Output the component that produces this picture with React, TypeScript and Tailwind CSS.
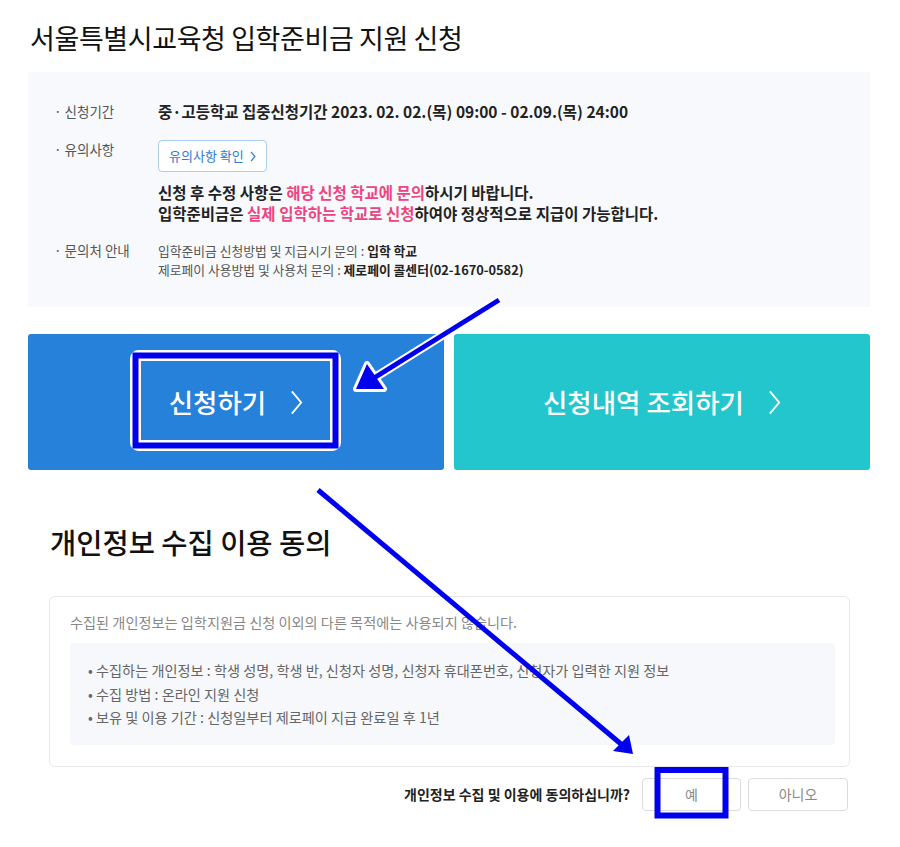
import React from 'react';

const FONT = '"Noto Sans CJK KR", "Noto Sans", sans-serif';

function Chevron({ className, width = 2 }: { className?: string; width?: number }) {
  return (
    <svg viewBox="0 0 14 28" className={className} fill="none" stroke="currentColor" strokeWidth={width}>
      <path d="M2 2 L12 14 L2 26" />
    </svg>
  );
}

function InfoRow({ label, children, labelClass }: { label: string; children: React.ReactNode; labelClass?: string }) {
  return (
    <div className="flex">
      <div className={`w-[130px] shrink-0 pl-[26px] text-[13.5px] text-[#555] ${labelClass ?? 'leading-[22px]'}`}>
        · {label}
      </div>
      <div className="flex-1">{children}</div>
    </div>
  );
}

function Annotations() {
  return (
    <svg className="pointer-events-none absolute left-0 top-0" width="900" height="847" viewBox="0 0 900 847">
      {/* box around 신청하기 */}
      <rect x="135.5" y="355.5" width="200" height="90" rx="3" fill="none" stroke="#fff" strokeWidth="11" />
      <rect x="135.5" y="355.5" width="200" height="90" fill="none" stroke="#0000ee" strokeWidth="6" />
      {/* arrow to 신청하기 */}
      <line x1="499" y1="300" x2="374" y2="378" stroke="#fff" strokeWidth="9" strokeLinecap="round" />
      <polygon points="356,389 367,364 384,389" fill="#fff" stroke="#fff" strokeWidth="6" strokeLinejoin="round" />
      <line x1="499" y1="300" x2="374" y2="378" stroke="#0000ee" strokeWidth="5" />
      <polygon points="356,389 367,364 384,389" fill="#0000ee" />
      {/* arrow to 예 */}
      <line x1="318" y1="490" x2="621" y2="744" stroke="#0000ee" strokeWidth="5" />
      <polygon points="633,754 613,751 629,735" fill="#0000ee" />
      {/* box around 예 */}
      <rect x="657.5" y="770" width="68" height="45.5" fill="none" stroke="#0000ee" strokeWidth="6" />
    </svg>
  );
}

export default function App() {
  return (
    <div className="relative h-[847px] w-[900px] overflow-hidden bg-white" style={{ fontFamily: FONT }}>
      <div className="pl-[28px] pr-[30px]">
        <h1 className="pt-[18px] pl-[2px] text-[27px] leading-[40px] font-normal tracking-[-0.4px] text-[#111]">
          서울특별시교육청 입학준비금 지원 신청
        </h1>

        {/* info box */}
        <div className="mt-[14px] h-[235px] bg-[#f7f9fc] pt-[28px]">
          <InfoRow label="신청기간">
            <p className="text-[15.5px] leading-[22px] font-bold text-[#222]">
              중·고등학교 집중신청기간 2023. 02. 02.(목) 09:00 - 02.09.(목) 24:00
            </p>
          </InfoRow>
          <div className="mt-[18px]">
            <InfoRow label="유의사항" labelClass="leading-[18px]">
              <button className="flex h-[32px] items-center gap-[6px] rounded-[4px] border border-[#a9cdee] bg-white px-[10px] text-[13px] text-[#2b7bd6]">
                유의사항 확인
                <Chevron className="h-[11px] w-[6px]" width={3} />
              </button>
              <div className="mt-[10px] text-[15.5px] leading-[21px] font-bold text-[#222]">
                <p>
                  신청 후 수정 사항은 <span className="text-[#ec4580]">해당 신청 학교에 문의</span>하시기 바랍니다.
                </p>
                <p>
                  입학준비금은 <span className="text-[#ec4580]">실제 입학하는 학교로 신청</span>하여야 정상적으로 지급이 가능합니다.
                </p>
              </div>
            </InfoRow>
          </div>
          <div className="mt-[17px]">
            <InfoRow label="문의처 안내" labelClass="leading-[19px]">
              <div className="text-[12.8px] leading-[19px] text-[#555]">
                <p>
                  입학준비금 신청방법 및 지급시기 문의 : <b className="text-[#222]">입학 학교</b>
                </p>
                <p>
                  제로페이 사용방법 및 사용처 문의 : <b className="text-[#222]">제로페이 콜센터(02-1670-0582)</b>
                </p>
              </div>
            </InfoRow>
          </div>
        </div>

        {/* action buttons */}
        <div className="mt-[27px] flex h-[136px] gap-[10px]">
          <button className="flex flex-1 items-center justify-center gap-[24px] rounded-[3px] bg-[#2581da] text-[26.5px] font-medium text-white">
            <span>신청하기</span>
            <Chevron className="h-[27px] w-[13px]" />
          </button>
          <button className="flex flex-1 items-center justify-center gap-[24px] rounded-[3px] bg-[#24c6cd] text-[26.5px] font-medium text-white">
            <span>신청내역 조회하기</span>
            <Chevron className="h-[27px] w-[13px]" />
          </button>
        </div>
      </div>

      {/* privacy consent */}
      <div className="pl-[49px] pr-[50px]">
        <h2 className="mt-[53px] pl-[1px] text-[28.5px] leading-[38px] font-medium text-[#111]">개인정보 수집 이용 동의</h2>
        <div className="mt-[35px] rounded-[6px] border border-[#e6e8ec] pt-[15px] pr-[14px] pb-[21px] pl-[20px]">
          <p className="text-[14.2px] leading-[20px] text-[#888]">
            수집된 개인정보는 입학지원금 신청 이외의 다른 목적에는 사용되지 않습니다.
          </p>
          <ul className="mt-[11px] rounded-[4px] bg-[#f6f8fb] pt-[16px] pb-[15px] pl-[18px] text-[14.2px] leading-[23.5px] text-[#666]">
            <li>• 수집하는 개인정보 : 학생 성명, 학생 반, 신청자 성명, 신청자 휴대폰번호, 신청자가 입력한 지원 정보</li>
            <li>• 수집 방법 : 온라인 지원 신청</li>
            <li>• 보유 및 이용 기간 : 신청일부터 제로페이 지급 완료일 후 1년</li>
          </ul>
        </div>
        <div className="mt-[11px] flex items-center justify-end gap-[7px] pr-[2px]">
          <span className="mr-[5px] text-[14px] font-bold text-[#222]">개인정보 수집 및 이용에 동의하십니까?</span>
          <button className="h-[33px] w-[99px] rounded-[4px] border border-[#dcdcdc] bg-white text-[14px] text-[#888]">예</button>
          <button className="h-[33px] w-[100px] rounded-[4px] border border-[#dcdcdc] bg-white text-[14px] text-[#888]">아니오</button>
        </div>
      </div>

      <Annotations />
    </div>
  );
}
